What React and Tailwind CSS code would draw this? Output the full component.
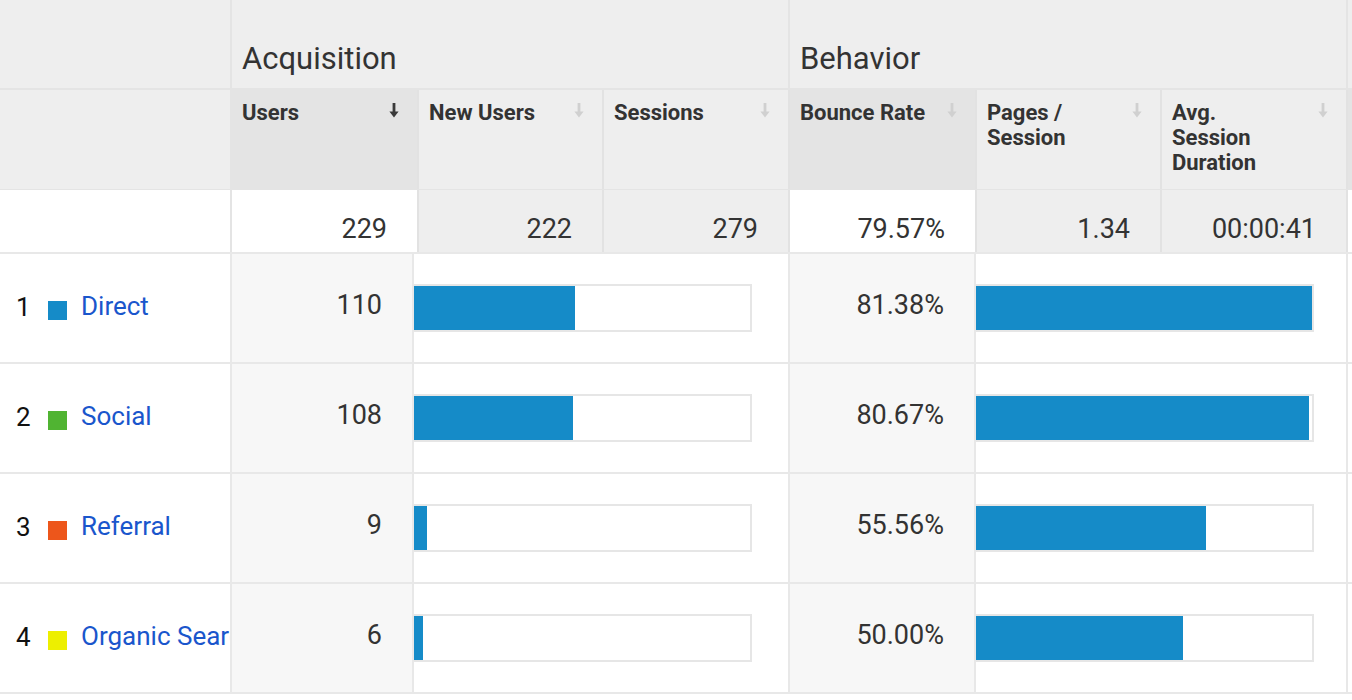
import React from "react";

const rows = [
  { n: "1", color: "#158bc8", name: "Direct", users: "110", uw: 161, br: "81.38%", bw: 336 },
  { n: "2", color: "#50b432", name: "Social", users: "108", uw: 159, br: "80.67%", bw: 333 },
  { n: "3", color: "#ed561b", name: "Referral", users: "9", uw: 13, br: "55.56%", bw: 230 },
  { n: "4", color: "#edef00", name: "Organic Search", users: "6", uw: 9, br: "50.00%", bw: 207 },
];

function SortArrow({ active }) {
  return (
    <svg width="10" height="15" viewBox="0 0 10 15" className="mt-[3px] shrink-0">
      <path d="M3.6 0h2.8v8.5H9.6L5 14.6 0.4 8.5h3.2z" fill={active ? "#3a3a3a" : "#d0d0d0"} />
    </svg>
  );
}

function HeadCell({ w, bg, active, children }) {
  return (
    <div
      className={`${w} ${bg} flex justify-between border-r-2 border-[#e2e2e2] pl-[10px] pr-[18px] pt-[10px]`}
    >
      <div className="whitespace-nowrap text-[22px] font-bold leading-[25px] text-[#333]">{children}</div>
      <SortArrow active={active} />
    </div>
  );
}

function TotalCell({ w, bg, children }) {
  return (
    <div
      className={`${w} ${bg} flex justify-end border-r-2 border-[#e2e2e2] pr-[30px] pt-[19px] text-[27px] leading-normal text-[#333]`}
    >
      {children}
    </div>
  );
}

function Bar({ width }) {
  return (
    <div className="h-[48px] w-[338px] border-y-2 border-r-2 border-[#e6e6e6] bg-white">
      <div className="h-full bg-[#158bc8]" style={{ width: `${width}px` }} />
    </div>
  );
}

export default function App() {
  return (
    <div className="w-[1352px] h-[700px] overflow-hidden bg-white font-['Roboto','Liberation_Sans',sans-serif]">
      {/* group header */}
      <div className="flex h-[90px] border-b-2 border-[#e4e4e4] bg-[#eeeeee]">
        <div className="w-[232px] border-r-2 border-[#e4e4e4]" />
        <div className="w-[558px] border-r-2 border-[#e4e4e4] pl-[10px] pt-[36px] text-[31px] leading-normal text-[#333]">
          Acquisition
        </div>
        <div className="w-[558px] border-r-2 border-[#e4e4e4] pl-[10px] pt-[36px] text-[31px] leading-normal text-[#333]">
          Behavior
        </div>
        <div className="flex-1" />
      </div>

      {/* column header */}
      <div className="flex h-[100px] border-b border-[#e4e4e4] bg-[#eeeeee]">
        <div className="w-[232px] border-r-2 border-[#e4e4e4]" />
        <HeadCell w="w-[187px]" bg="bg-[#e4e4e4]" active>
          Users
        </HeadCell>
        <HeadCell w="w-[185px]" bg="bg-[#eeeeee]">
          New Users
        </HeadCell>
        <HeadCell w="w-[186px]" bg="bg-[#eeeeee]">
          Sessions
        </HeadCell>
        <HeadCell w="w-[187px]" bg="bg-[#e4e4e4]">
          Bounce Rate
        </HeadCell>
        <HeadCell w="w-[185px]" bg="bg-[#eeeeee]">
          Pages /
          <br />
          Session
        </HeadCell>
        <HeadCell w="w-[186px]" bg="bg-[#eeeeee]">
          Avg.
          <br />
          Session
          <br />
          Duration
        </HeadCell>
        <div className="flex-1 bg-[#e4e4e4]" />
      </div>

      {/* totals */}
      <div className="flex h-[64px] border-b-2 border-[#e8e8e8] bg-white">
        <div className="w-[232px] border-r-2 border-[#e4e4e4]" />
        <TotalCell w="w-[187px]" bg="bg-white">229</TotalCell>
        <TotalCell w="w-[185px]" bg="bg-[#eeeeee]">222</TotalCell>
        <TotalCell w="w-[186px]" bg="bg-[#eeeeee]">279</TotalCell>
        <TotalCell w="w-[187px]" bg="bg-white">79.57%</TotalCell>
        <TotalCell w="w-[185px]" bg="bg-[#eeeeee]">1.34</TotalCell>
        <TotalCell w="w-[186px]" bg="bg-[#eeeeee]">00:00:41</TotalCell>
        <div className="flex-1" />
      </div>

      {/* body rows */}
      {rows.map((r) => (
        <div key={r.n} className="flex h-[110px] border-b-2 border-[#e8e8e8] bg-white">
          <div className="flex w-[232px] shrink-0 items-start overflow-hidden whitespace-nowrap border-r-2 border-[#e8e8e8] pl-[16px] pt-[33px]">
            <span className="mt-[1px] w-[32px] shrink-0 text-[26px] leading-normal text-[#111]">{r.n}</span>
            <span className="mt-[14px] h-[19px] w-[19px] shrink-0" style={{ backgroundColor: r.color }} />
            <span className="ml-[14px] shrink-0 text-[26px] leading-normal text-[#1a56cc]">{r.name}</span>
          </div>
          <div className="flex w-[182px] shrink-0 justify-end border-r-2 border-[#e8e8e8] bg-[#f7f7f7] pr-[30px] pt-[31px] text-[27px] leading-normal text-[#333]">
            {r.users}
          </div>
          <div className="flex w-[376px] shrink-0 items-center border-r-2 border-[#e8e8e8]">
            <Bar width={r.uw} />
          </div>
          <div className="flex w-[186px] shrink-0 justify-end border-r-2 border-[#e8e8e8] bg-[#f7f7f7] pr-[30px] pt-[31px] text-[27px] leading-normal text-[#333]">
            {r.br}
          </div>
          <div className="flex w-[372px] shrink-0 items-center border-r-2 border-[#e8e8e8]">
            <Bar width={r.bw} />
          </div>
          <div className="flex-1" />
        </div>
      ))}
    </div>
  );
}
